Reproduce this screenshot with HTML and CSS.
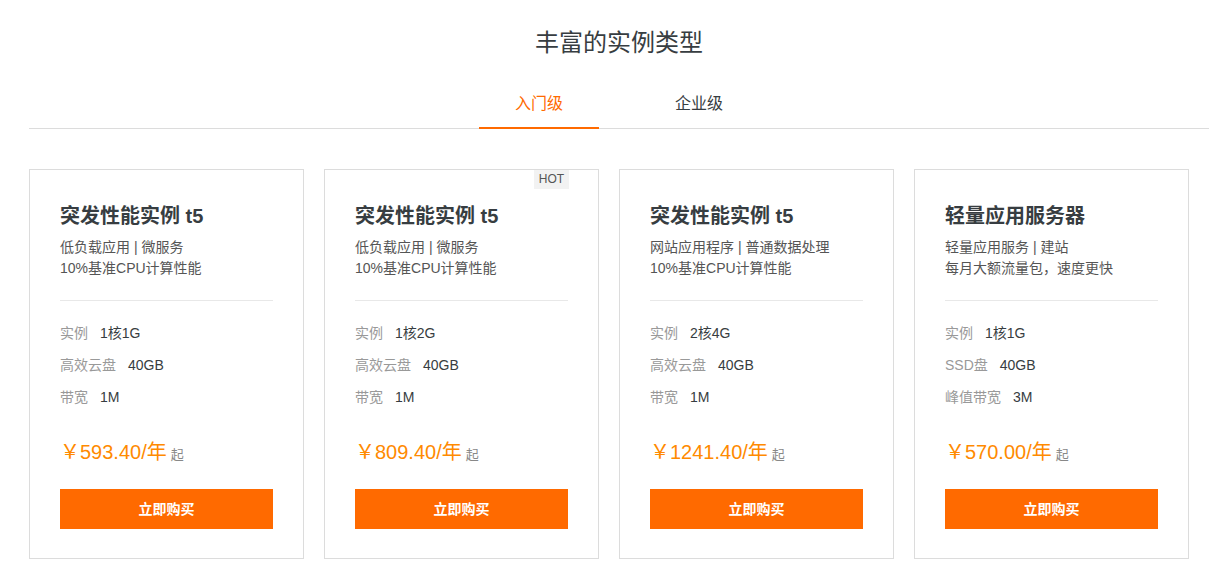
FILE: index.html
```html
<!DOCTYPE html>
<html lang="zh-CN">
<head>
<meta charset="utf-8">
<title>丰富的实例类型</title>
<link rel="stylesheet" href="styles.css">
</head>
<body>
<div class="section">
  <h2 class="section-title">丰富的实例类型</h2>
  <div class="tabs">
    <div class="tab active">入门级</div>
    <div class="tab">企业级</div>
  </div>
  <div class="cards">
    <div class="card">
      <h3 class="card-title">突发性能实例 t5</h3>
      <p class="card-desc">低负载应用 | 微服务<br>10%基准CPU计算性能</p>
      <div class="divider"></div>
      <ul class="specs">
        <li><span class="label">实例</span><span class="value">1核1G</span></li>
        <li><span class="label">高效云盘</span><span class="value">40GB</span></li>
        <li><span class="label">带宽</span><span class="value">1M</span></li>
      </ul>
      <div class="price"><span class="amount">￥593.40/年</span><span class="from">起</span></div>
      <a class="buy">立即购买</a>
    </div>
    <div class="card">
      <span class="badge">HOT</span>
      <h3 class="card-title">突发性能实例 t5</h3>
      <p class="card-desc">低负载应用 | 微服务<br>10%基准CPU计算性能</p>
      <div class="divider"></div>
      <ul class="specs">
        <li><span class="label">实例</span><span class="value">1核2G</span></li>
        <li><span class="label">高效云盘</span><span class="value">40GB</span></li>
        <li><span class="label">带宽</span><span class="value">1M</span></li>
      </ul>
      <div class="price"><span class="amount">￥809.40/年</span><span class="from">起</span></div>
      <a class="buy">立即购买</a>
    </div>
    <div class="card">
      <h3 class="card-title">突发性能实例 t5</h3>
      <p class="card-desc">网站应用程序 | 普通数据处理<br>10%基准CPU计算性能</p>
      <div class="divider"></div>
      <ul class="specs">
        <li><span class="label">实例</span><span class="value">2核4G</span></li>
        <li><span class="label">高效云盘</span><span class="value">40GB</span></li>
        <li><span class="label">带宽</span><span class="value">1M</span></li>
      </ul>
      <div class="price"><span class="amount">￥1241.40/年</span><span class="from">起</span></div>
      <a class="buy">立即购买</a>
    </div>
    <div class="card">
      <h3 class="card-title">轻量应用服务器</h3>
      <p class="card-desc">轻量应用服务 | 建站<br>每月大额流量包，速度更快</p>
      <div class="divider"></div>
      <ul class="specs">
        <li><span class="label">实例</span><span class="value">1核1G</span></li>
        <li><span class="label">SSD盘</span><span class="value">40GB</span></li>
        <li><span class="label">峰值带宽</span><span class="value">3M</span></li>
      </ul>
      <div class="price"><span class="amount">￥570.00/年</span><span class="from">起</span></div>
      <a class="buy">立即购买</a>
    </div>
  </div>
</div>
</body>
</html>
```
FILE: styles.css
```css
* { box-sizing: border-box; }
html, body {
  margin: 0;
  padding: 0;
  background: #fff;
}
body {
  font-family: "Liberation Sans", "Noto Sans CJK SC", sans-serif;
  color: #373d41;
}
.section {
  width: 1180px;
  margin-left: 29px;
  padding-top: 25px;
}
.section-title {
  margin: 0;
  font-size: 24px;
  line-height: 36px;
  font-weight: normal;
  text-align: center;
  color: #373d41;
}
.tabs {
  margin-top: 20px;
  display: flex;
  justify-content: center;
  gap: 40px;
  border-bottom: 1px solid #dcdcdc;
}
.tab {
  width: 120px;
  text-align: center;
  font-size: 16px;
  line-height: 44px;
  padding-top: 1px;
  padding-bottom: 1px;
  border-bottom: 2px solid transparent;
  margin-bottom: -1px;
  color: #373d41;
}
.tab.active {
  color: #ff6a00;
  border-bottom-color: #ff6a00;
}
.cards {
  display: flex;
  margin-top: 40px;
}
.card {
  position: relative;
  width: 275px;
  margin-right: 20px;
  border: 1px solid #dcdcdc;
  padding: 31px 30px 29px;
}
.badge {
  position: absolute;
  top: 0;
  right: 29px;
  width: 35px;
  height: 19px;
  line-height: 19px;
  background: #f2f2f2;
  color: #555;
  font-size: 12px;
  text-align: center;
}
.card-title {
  margin: 0;
  font-size: 20px;
  line-height: 30px;
  font-weight: bold;
  color: #373d41;
}
.card-desc {
  margin: 6px 0 0;
  font-size: 14px;
  line-height: 21px;
  color: #555;
}
.divider {
  margin-top: 21px;
  height: 1px;
  background: #e8e8e8;
}
.specs {
  list-style: none;
  margin: 16px 0 0;
  padding: 0;
}
.specs li {
  font-size: 14px;
  line-height: 32px;
  display: flex;
  gap: 12px;
}
.label { color: #999; }
.value { color: #373d41; }
.price {
  margin-top: 24px;
  line-height: 30px;
  display: flex;
  align-items: baseline;
}
.amount {
  font-size: 20px;
  color: #ff8a00;
}
.from {
  font-size: 13px;
  color: #888;
  margin-left: 4px;
}
.buy {
  display: block;
  margin-top: 19px;
  height: 40px;
  line-height: 40px;
  background: #ff6a00;
  color: #fff;
  font-size: 14px;
  font-weight: bold;
  text-align: center;
}
```
